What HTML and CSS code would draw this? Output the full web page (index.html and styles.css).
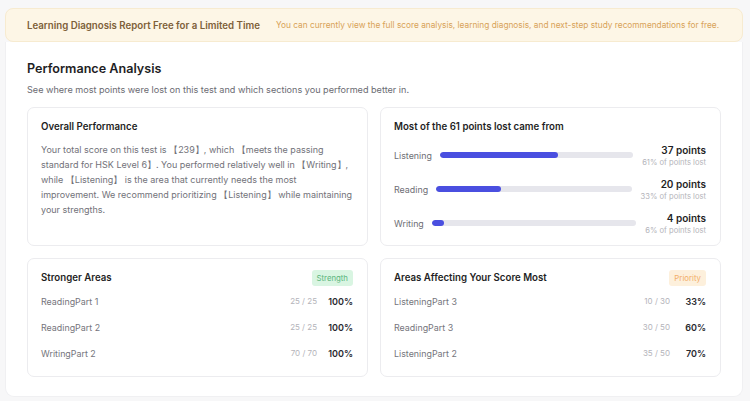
FILE: index.html
```html
<!DOCTYPE html>
<html>
<head>
<meta charset="utf-8">
<link rel="stylesheet" href="styles.css">
</head>
<body>
<div class="page">
  <div class="banner">
    <span class="banner-title">Learning Diagnosis Report Free for a Limited Time</span>
    <span class="banner-text">You can currently view the full score analysis, learning diagnosis, and next-step study recommendations for free.</span>
  </div>
  <div class="main">
    <h1 class="title">Performance Analysis</h1>
    <p class="subtitle">See where most points were lost on this test and which sections you performed better in.</p>
    <div class="grid">
      <div class="card">
        <h2 class="card-title">Overall Performance</h2>
        <p class="summary">Your total score on this test is 【239】, which 【meets the passing standard for HSK Level 6】. You performed relatively well in 【Writing】, while 【Listening】 is the area that currently needs the most improvement. We recommend prioritizing 【Listening】 while maintaining your strengths.</p>
      </div>
      <div class="card">
        <h2 class="card-title">Most of the 61 points lost came from</h2>
        <div class="bars">
          <div class="bar-row">
            <span class="bar-label">Listening</span>
            <div class="track"><div class="fill" style="width:61%"></div></div>
            <div class="bar-value"><div class="pts">37 points</div><div class="pct">61% of points lost</div></div>
          </div>
          <div class="bar-row">
            <span class="bar-label">Reading</span>
            <div class="track"><div class="fill" style="width:33%"></div></div>
            <div class="bar-value"><div class="pts">20 points</div><div class="pct">33% of points lost</div></div>
          </div>
          <div class="bar-row">
            <span class="bar-label">Writing</span>
            <div class="track"><div class="fill" style="width:6%"></div></div>
            <div class="bar-value"><div class="pts">4 points</div><div class="pct">6% of points lost</div></div>
          </div>
        </div>
      </div>
      <div class="card">
        <div class="card-head">
          <h2 class="card-title">Stronger Areas</h2>
          <span class="badge badge-green">Strength</span>
        </div>
        <div class="list">
          <div class="item"><span class="item-name">ReadingPart 1</span><span class="item-score">25 / 25</span><span class="item-pct">100%</span></div>
          <div class="item"><span class="item-name">ReadingPart 2</span><span class="item-score">25 / 25</span><span class="item-pct">100%</span></div>
          <div class="item"><span class="item-name">WritingPart 2</span><span class="item-score">70 / 70</span><span class="item-pct">100%</span></div>
        </div>
      </div>
      <div class="card">
        <div class="card-head">
          <h2 class="card-title">Areas Affecting Your Score Most</h2>
          <span class="badge badge-orange">Priority</span>
        </div>
        <div class="list">
          <div class="item"><span class="item-name">ListeningPart 3</span><span class="item-score">10 / 30</span><span class="item-pct">33%</span></div>
          <div class="item"><span class="item-name">ReadingPart 3</span><span class="item-score">30 / 50</span><span class="item-pct">60%</span></div>
          <div class="item"><span class="item-name">ListeningPart 2</span><span class="item-score">35 / 50</span><span class="item-pct">70%</span></div>
        </div>
      </div>
    </div>
  </div>
</div>
</body>
</html>
```
FILE: styles.css
```css
* { box-sizing: border-box; }
html, body { margin: 0; padding: 0; }
body {
  background: #f7f7f8;
  font-family: Inter, "Noto Sans", "Liberation Sans", sans-serif;
  color: #222;
}
.page {
  width: 738px;
  margin-left: 5px;
  padding-top: 8px;
}
.banner {
  height: 34px;
  background: #fdf6e6;
  border: 1px solid #f7ebd0;
  border-radius: 8px;
  display: flex;
  align-items: center;
  padding: 0 21px;
  gap: 16px;
  white-space: nowrap;
}
.banner-title {
  font-size: 9.7px;
  font-weight: 600;
  color: #7d6039;
}
.banner-text {
  font-size: 8.3px;
  color: #d8a258;
}
.main {
  background: #fff;
  border: 1px solid #f0f0f2;
  border-top: none;
  border-radius: 0 0 9px 9px;
  padding: 17px 22px 19px 21px;
}
.title {
  margin: 0;
  font-size: 12.6px;
  font-weight: 600;
  color: #1e1e24;
  line-height: 20px;
}
.subtitle {
  margin: 4px 0 10px;
  font-size: 9.1px;
  color: #6b6b72;
  line-height: 14px;
}
.grid {
  display: grid;
  grid-template-columns: 341px 341px;
  grid-template-rows: 139px 119px;
  column-gap: 12px;
  row-gap: 12px;
}
.card {
  border: 1px solid #ececef;
  border-radius: 7px;
  padding: 12px 14px 12px 13px;
}
.card-title {
  margin: 0;
  font-size: 9.7px;
  font-weight: 600;
  color: #1f1f25;
  line-height: 14px;
}
.summary {
  margin: 8px 0 0;
  font-size: 9px;
  line-height: 15px;
  color: #727279;
}
.bars {
  margin-top: 8px;
  display: flex;
  flex-direction: column;
  gap: 8px;
}
.bar-row {
  display: flex;
  align-items: center;
  height: 26px;
}
.bar-label {
  font-size: 8.9px;
  color: #6e6e75;
  margin-right: 8px;
}
.track {
  flex: 1;
  height: 6px;
  background: #e6e6ec;
  border-radius: 3px;
  overflow: hidden;
  margin-right: 9px;
}
.fill {
  height: 100%;
  background: #4a4fe0;
  border-radius: 3px;
}
.bar-value {
  text-align: right;
}
.pts {
  font-size: 10px;
  font-weight: 600;
  color: #1f1f25;
  line-height: 14px;
}
.pct {
  font-size: 7.6px;
  color: #b4b4ba;
  line-height: 11px;
}
.card-head {
  display: flex;
  justify-content: space-between;
  align-items: center;
  height: 16px;
  margin-top: -1px;
}
.badge {
  font-size: 7.8px;
  padding: 0 5px;
  height: 16px;
  line-height: 16px;
  border-radius: 3px;
}
.badge-green { background: #d9f5e2; color: #5cb57e; }
.badge-orange { background: #fdf0dc; color: #f2ae6a; }
.list {
  margin-top: 2px;
  display: flex;
  flex-direction: column;
}
.item {
  display: flex;
  align-items: center;
  height: 26px;
}
.item-name {
  flex: 1;
  font-size: 8.9px;
  color: #75757c;
}
.item-score {
  font-size: 8px;
  color: #b4b4ba;
}
.item-pct {
  width: 36px;
  text-align: right;
  font-size: 9px;
  font-weight: 600;
  color: #2a2a30;
}
```
